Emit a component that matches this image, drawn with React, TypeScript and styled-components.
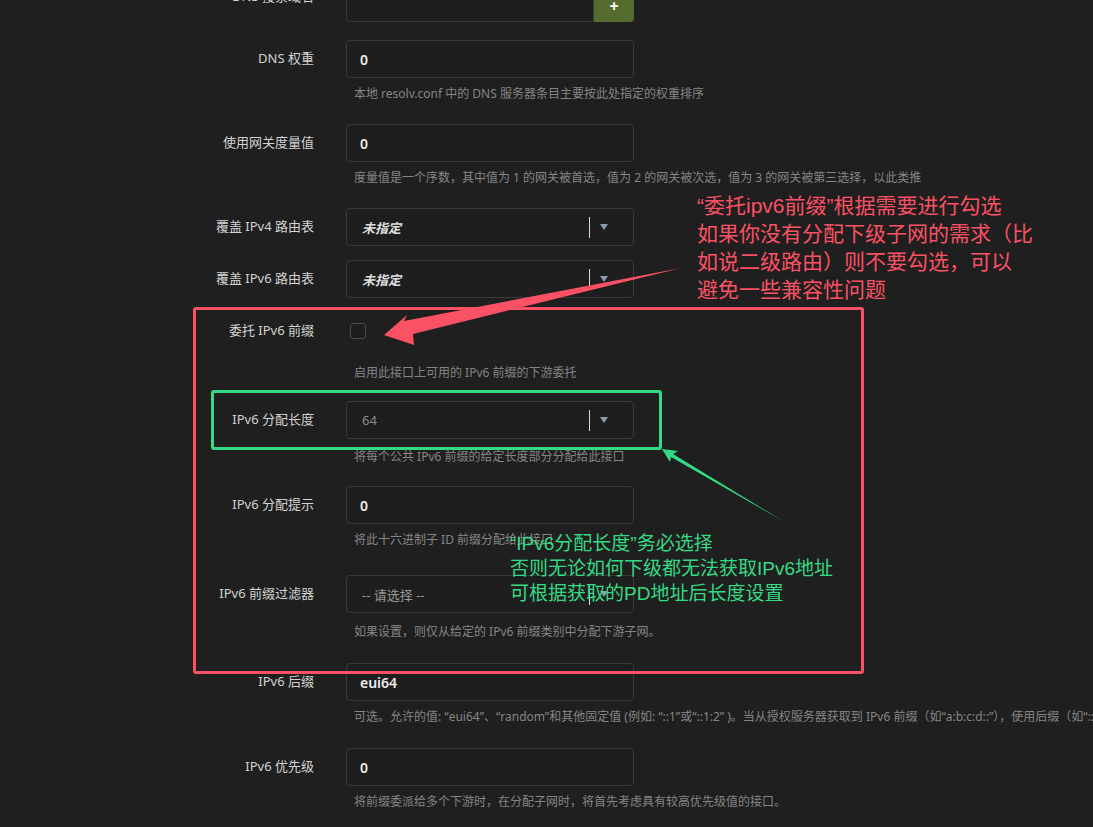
import styled, { createGlobalStyle } from "styled-components";

const GlobalStyle = createGlobalStyle`
  html, body {
    margin: 0;
    padding: 0;
    background: #1f1f1f;
    overflow: hidden;
  }
  body {
    font-family: "Noto Sans", "Noto Sans CJK SC", sans-serif;
    color: #d4d4d4;
  }
`;

const Page = styled.div`
  position: relative;
  display: flow-root;
  width: 1093px;
  height: 827px;
  overflow: hidden;
`;

const Form = styled.div`
  margin-top: -22px;
`;

const Field = styled.div<{ $mb?: number }>`
  display: grid;
  grid-template-columns: 314px 288px;
  column-gap: 32px;
  margin-bottom: ${(p) => p.$mb ?? 14}px;
`;

const Label = styled.div`
  grid-column: 1;
  grid-row: 1;
  align-self: start;
  box-sizing: border-box;
  height: 38px;
  padding-bottom: 4px;
  display: flex;
  align-items: center;
  justify-content: flex-end;
  font-size: 13px;
  color: #d2d2d2;
  white-space: nowrap;
`;

const Control = styled.div<{ $h?: number }>`
  grid-column: 2;
  grid-row: 1;
  height: ${(p) => p.$h ?? 38}px;
  display: flex;
  align-items: center;
`;

const Description = styled.div<{ $mt?: number }>`
  grid-column: 2;
  grid-row: 2;
  margin: ${(p) => p.$mt ?? 8}px 0 8px;
  padding-left: 8px;
  font-size: 12px;
  line-height: 16px;
  color: #858585;
  white-space: nowrap;
`;

const Input = styled.div<{ $radius?: string }>`
  box-sizing: border-box;
  flex: 1;
  height: 100%;
  display: flex;
  align-items: center;
  padding-left: 13px;
  border: 1px solid #3a3a3a;
  border-radius: ${(p) => p.$radius ?? "4px"};
  background: #1e1e1e;
  font-size: 14px;
  font-weight: 600;
  color: #ececec;
`;

const AddButton = styled.div`
  box-sizing: border-box;
  width: 40px;
  height: 100%;
  display: flex;
  align-items: flex-end;
  justify-content: center;
  padding-bottom: 5px;
  background: #566b2e;
  border-radius: 0 4px 4px 0;
  color: #fff;
  font-size: 16px;
  font-weight: 700;
`;

const Select = styled.div`
  box-sizing: border-box;
  flex: 1;
  height: 38px;
  display: flex;
  align-items: center;
  padding-left: 15px;
  border: 1px solid #3a3a3a;
  border-radius: 4px;
  background: #1e1e1e;
`;

const SelectValue = styled.span<{ $kind: "unset" | "value" | "placeholder" }>`
  flex: 1;
  font-size: 13px;
  font-weight: ${(p) => (p.$kind === "unset" ? 700 : 400)};
  font-style: ${(p) => (p.$kind === "unset" ? "italic" : "normal")};
  color: ${(p) =>
    p.$kind === "unset" ? "#dedede" : p.$kind === "value" ? "#8c8c8c" : "#9a9a9a"};
`;

const Separator = styled.span`
  width: 1px;
  height: 21px;
  background: #d8d8d8;
  margin-right: 10px;
`;

const Caret = styled.span`
  width: 0;
  height: 0;
  border-left: 4px solid transparent;
  border-right: 4px solid transparent;
  border-top: 6px solid #8c9aae;
  margin-right: 25px;
`;

const Checkbox = styled.div`
  box-sizing: border-box;
  width: 16px;
  height: 16px;
  margin-left: 4px;
  border: 1px solid #4a4a4a;
  border-radius: 3px;
  background: #1e1e1e;
`;

const Frame = styled.div<{ $color: string; $x: number; $y: number; $w: number; $h: number }>`
  position: absolute;
  box-sizing: border-box;
  left: ${(p) => p.$x}px;
  top: ${(p) => p.$y}px;
  width: ${(p) => p.$w}px;
  height: ${(p) => p.$h}px;
  border: 3px solid ${(p) => p.$color};
  border-radius: 3px;
  pointer-events: none;
`;

const Note = styled.div<{ $color: string; $x: number; $y: number; $size: number; $lh: number }>`
  position: absolute;
  left: ${(p) => p.$x}px;
  top: ${(p) => p.$y}px;
  font-family: "Liberation Sans", "Noto Sans CJK SC", sans-serif;
  font-size: ${(p) => p.$size}px;
  line-height: ${(p) => p.$lh}px;
  color: ${(p) => p.$color};
  white-space: nowrap;
`;

const Arrows = styled.svg`
  position: absolute;
  left: 0;
  top: 0;
  pointer-events: none;
`;

const SelectBox = ({ value, kind }: { value: string; kind: "unset" | "value" | "placeholder" }) => (
  <Select>
    <SelectValue $kind={kind}>{value}</SelectValue>
    <Separator />
    <Caret />
  </Select>
);

const App = () => {
  return (
    <Page>
      <GlobalStyle />
      <Form>
        <Field $mb={18}>
          <Label>DNS 搜索域名</Label>
          <Control $h={44}>
            <Input $radius="4px 0 0 4px" />
            <AddButton>+</AddButton>
          </Control>
        </Field>

        <Field>
          <Label>DNS 权重</Label>
          <Control>
            <Input>0</Input>
          </Control>
          <Description>本地 resolv.conf 中的 DNS 服务器条目主要按此处指定的权重排序</Description>
        </Field>

        <Field>
          <Label>使用网关度量值</Label>
          <Control>
            <Input>0</Input>
          </Control>
          <Description>
            度量值是一个序数，其中值为 1 的网关被首选，值为 2 的网关被次选，值为 3 的网关被第三选择，以此类推
          </Description>
        </Field>

        <Field>
          <Label>覆盖 IPv4 路由表</Label>
          <Control>
            <SelectBox value="未指定" kind="unset" />
          </Control>
        </Field>

        <Field>
          <Label>覆盖 IPv6 路由表</Label>
          <Control>
            <SelectBox value="未指定" kind="unset" />
          </Control>
        </Field>

        <Field $mb={12}>
          <Label>委托 IPv6 前缀</Label>
          <Control>
            <Checkbox />
          </Control>
          <Description $mt={15}>启用此接口上可用的 IPv6 前缀的下游委托</Description>
        </Field>

        <Field $mb={13}>
          <Label>IPv6 分配长度</Label>
          <Control>
            <SelectBox value="64" kind="value" />
          </Control>
          <Description $mt={10}>将每个公共 IPv6 前缀的给定长度部分分配给此接口</Description>
        </Field>

        <Field $mb={19}>
          <Label>IPv6 分配提示</Label>
          <Control>
            <Input>0</Input>
          </Control>
          <Description>将此十六进制子 ID 前缀分配给此接口</Description>
        </Field>

        <Field $mb={15}>
          <Label>IPv6 前缀过滤器</Label>
          <Control>
            <SelectBox value="-- 请选择 --" kind="placeholder" />
          </Control>
          <Description $mt={11}>如果设置，则仅从给定的 IPv6 前缀类别中分配下游子网。</Description>
        </Field>

        <Field $mb={15}>
          <Label>IPv6 后缀</Label>
          <Control>
            <Input>eui64</Input>
          </Control>
          <Description>
            可选。允许的值: “eui64”、“random”和其他固定值 (例如: “::1”或“::1:2” )。当从授权服务器获取到 IPv6 前缀（如“a:b:c:d::”），使用后缀（如“::1”）合成 IPv6 地址（“a:b:c:d::1”）
          </Description>
        </Field>

        <Field>
          <Label>IPv6 优先级</Label>
          <Control>
            <Input>0</Input>
          </Control>
          <Description>将前缀委派给多个下游时，在分配子网时，将首先考虑具有较高优先级值的接口。</Description>
        </Field>
      </Form>

      <Frame $color="#fb5164" $x={193} $y={307} $w={671} $h={367} />
      <Frame $color="#33db84" $x={211} $y={390} $w={451} $h={60} />

      <Arrows width="1093" height="827" viewBox="0 0 1093 827">
        <polygon
          fill="#fb5164"
          points="384,335 407,315 404,321 681,268 413,334 414,345"
        />
        <polygon
          fill="#33db84"
          points="662,449 678,451 673,454 783,521 671,457 670,462"
        />
      </Arrows>

      <Note $color="#fb5164" $x={697} $y={192} $size={21} $lh={28}>
        “委托ipv6前缀”根据需要进行勾选
        <br />
        如果你没有分配下级子网的需求（比
        <br />
        如说二级路由）则不要勾选，可以
        <br />
        避免一些兼容性问题
      </Note>

      <Note $color="#33db84" $x={510} $y={531} $size={19} $lh={25}>
        “IPv6分配长度”务必选择
        <br />
        否则无论如何下级都无法获取IPv6地址
        <br />
        可根据获取的PD地址后长度设置
      </Note>
    </Page>
  );
};

export default App;
